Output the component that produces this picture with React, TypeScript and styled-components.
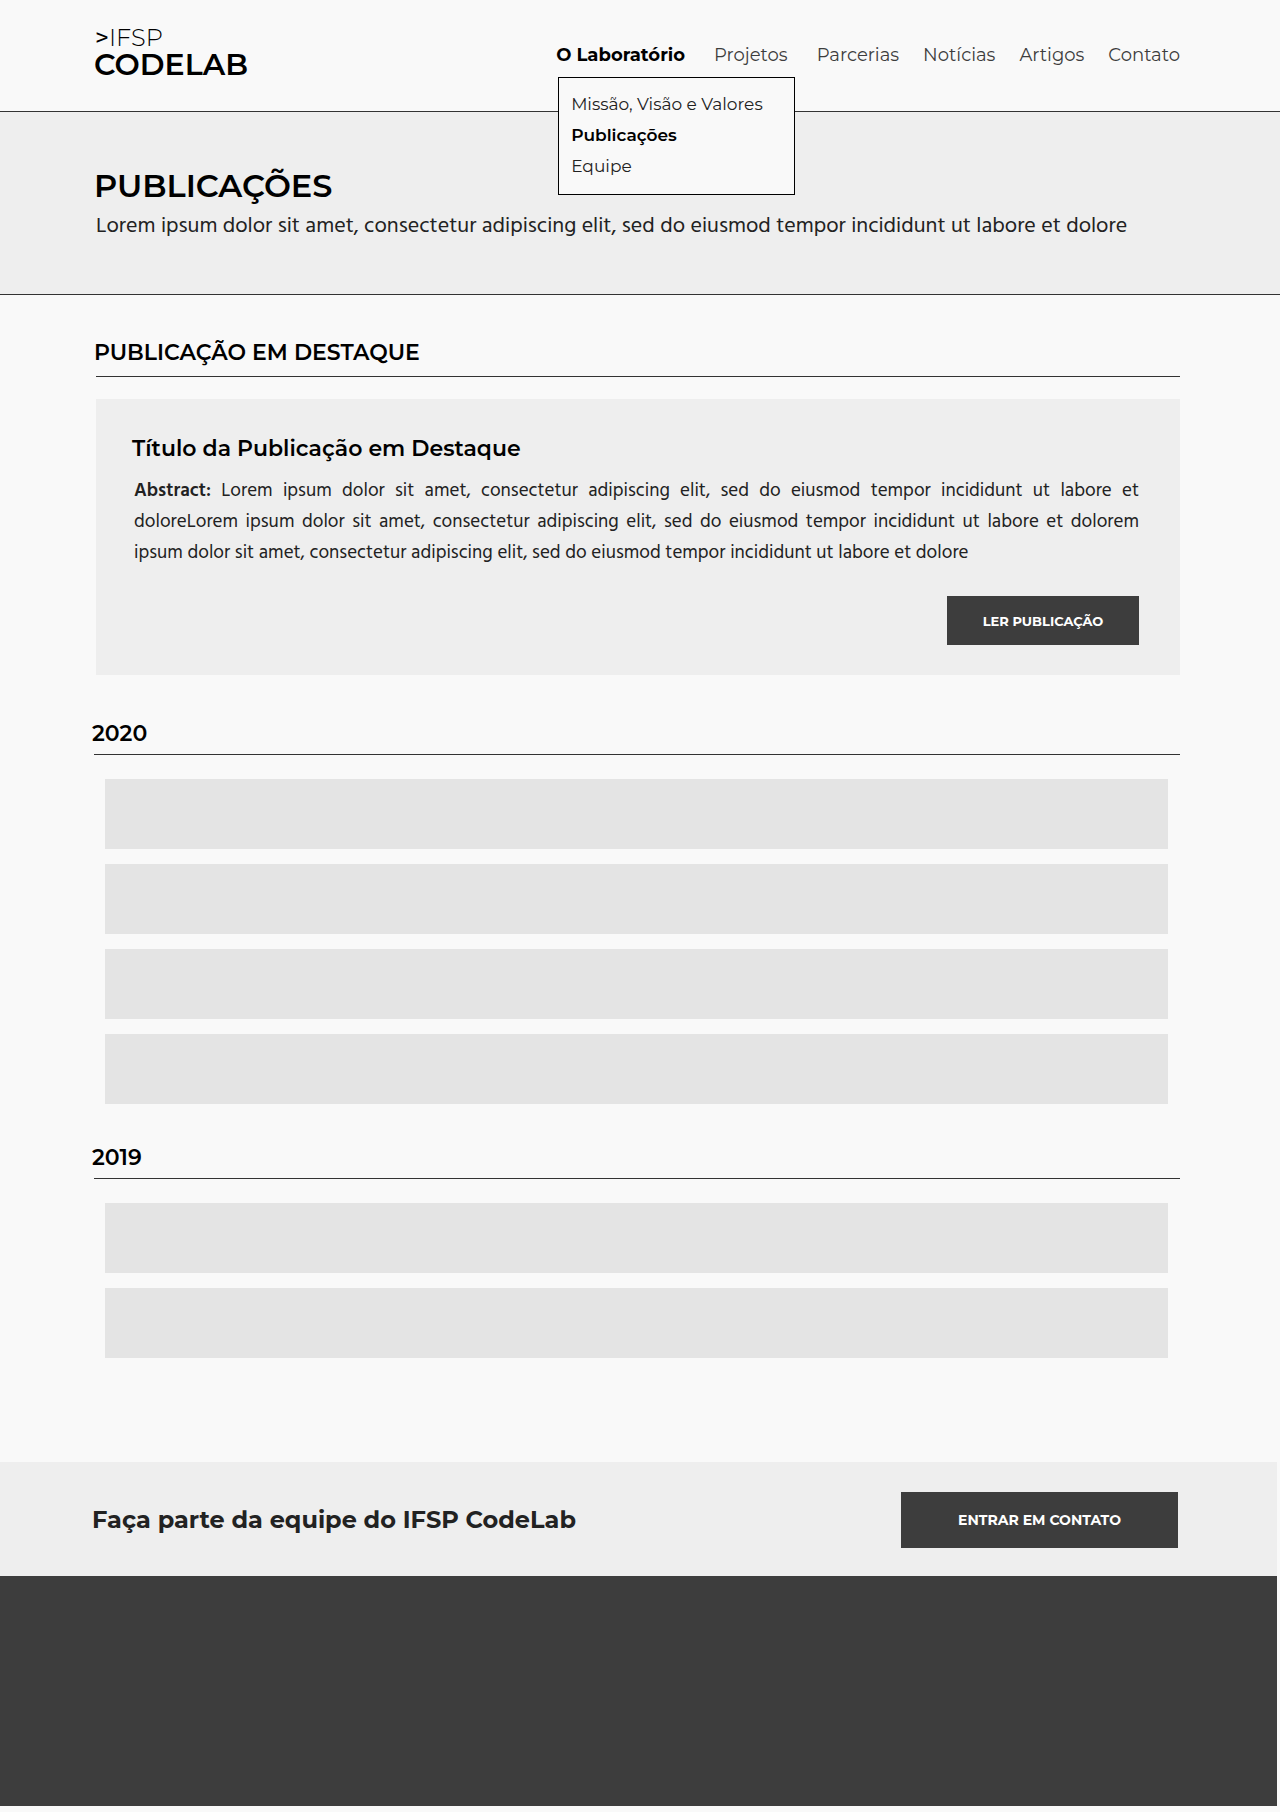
import React from "react";
import styled, { createGlobalStyle } from "styled-components";

const display = `Montserrat, Inter, "Liberation Sans", sans-serif`;
const text = `Hind, Lato, "Liberation Sans", sans-serif`;

const GlobalStyle = createGlobalStyle`
  *, *::before, *::after { box-sizing: border-box; }
  body { margin: 0; background: #f9f9f9; color: #000; font-family: ${display}; }
  h1, h2, h3, p, ul { margin: 0; padding: 0; }
  ul { list-style: none; }
  a { color: inherit; text-decoration: none; }
`;

const Page = styled.div`
  padding-bottom: 6px;
`;

const Header = styled.header`
  display: flex;
  justify-content: space-between;
  align-items: flex-start;
  height: 112px;
  padding: 25px 100px 0 94px;
  border-bottom: 1px solid #333;
`;

const Logo = styled.a`
  display: flex;
  flex-direction: column;
`;

const LogoTop = styled.span`
  padding-left: 1px;
  font-size: 24px;
  line-height: 26px;
  font-weight: 300;

  b { font-weight: 500; }
`;

const LogoName = styled.span`
  font-size: 30px;
  line-height: 28px;
  font-weight: 600;
`;

const Nav = styled.nav`
  padding-top: 15px;
`;

const NavList = styled.ul`
  display: flex;
  gap: 24px;
`;

const NavItem = styled.li<{ $spaced?: boolean }>`
  position: relative;
  margin-right: ${(p) => (p.$spaced ? 5 : 0)}px;
`;

const NavLink = styled.a<{ $active?: boolean }>`
  display: block;
  font-size: 18px;
  line-height: 30px;
  font-weight: ${(p) => (p.$active ? 700 : 400)};
  color: ${(p) => (p.$active ? "#000" : "#3d3d3d")};
  white-space: nowrap;
`;

const Submenu = styled.ul`
  position: absolute;
  top: 37px;
  left: 2px;
  z-index: 1;
  width: 237px;
  padding: 11px 12px 12px;
  background: #f9f9f9;
  border: 1px solid #000;
`;

const SubmenuLink = styled.a<{ $active?: boolean }>`
  display: block;
  font-size: 17px;
  line-height: 31px;
  font-weight: ${(p) => (p.$active ? 600 : 400)};
  color: ${(p) => (p.$active ? "#000" : "#222")};
  white-space: nowrap;
`;

const Hero = styled.section`
  padding: 54px 100px 50px 96px;
  background: #eee;
  border-bottom: 1px solid #333;
`;

const HeroTitle = styled.h1`
  margin: 0 0 4px -2px;
  font-size: 32px;
  line-height: 40px;
  font-weight: 600;
`;

const HeroText = styled.p`
  font-family: ${text};
  font-size: 22px;
  line-height: 34px;
  color: #222;
`;

const Main = styled.main`
  padding: 42px 100px 103px 94px;
`;

const Featured = styled.section`
  padding-left: 2px;
`;

const SectionTitle = styled.h2<{ $tight?: boolean }>`
  padding-bottom: ${(p) => (p.$tight ? 4 : 7)}px;
  border-bottom: 1px solid #333;
  font-size: 22px;
  line-height: 32px;
  font-weight: 600;

  span { margin-left: -2px; }
`;

const Card = styled.article`
  margin: 22px 0 43px;
  padding: 34px 41px 30px 38px;
  background: #eee;
`;

const CardTitle = styled.h3`
  margin-left: -2px;
  font-size: 22px;
  line-height: 32px;
  font-weight: 600;
`;

const Abstract = styled.p`
  margin: 11px 0 27px;
  font-family: ${text};
  font-size: 19px;
  line-height: 31px;
  color: #222;
  text-align: justify;

  b { font-weight: 600; }
`;

const CardActions = styled.div`
  display: flex;
  justify-content: flex-end;
`;

const Button = styled.button<{ $large?: boolean }>`
  width: ${(p) => (p.$large ? 277 : 192)}px;
  height: ${(p) => (p.$large ? 56 : 49)}px;
  padding: 0;
  border: 0;
  background: #3d3d3d;
  color: #fff;
  font-family: ${display};
  font-size: ${(p) => (p.$large ? 14 : 13)}px;
  font-weight: 700;
  cursor: pointer;
`;

const YearSection = styled.section`
  & + & { margin-top: 37px; }
`;

const EntryList = styled.ul`
  display: flex;
  flex-direction: column;
  gap: 15px;
  padding: 24px 12px 1px 11px;
`;

const Entry = styled.li`
  height: 70px;
  background: #e4e4e4;
`;

const CallToAction = styled.section`
  display: flex;
  justify-content: space-between;
  align-items: center;
  margin-right: 3px;
  padding: 30px 99px 28px 92px;
  background: #eee;
`;

const CallText = styled.p`
  font-size: 24px;
  line-height: 32px;
  font-weight: 700;
  color: #222;
`;

const Footer = styled.footer`
  height: 230px;
  margin-right: 3px;
  background: #3d3d3d;
`;

const navItems = ["O Laboratório", "Projetos", "Parcerias", "Notícias", "Artigos", "Contato"];
const submenuItems = ["Missão, Visão e Valores", "Publicações", "Equipe"];
const years = [
  { year: 2020, entries: 4 },
  { year: 2019, entries: 2 },
];

export default function App() {
  return (
    <>
      <GlobalStyle />
      <Page>
        <Header>
          <Logo href="#">
            <LogoTop><b>&gt;</b>IFSP</LogoTop>
            <LogoName>CODELAB</LogoName>
          </Logo>
          <Nav>
            <NavList>
              {navItems.map((item, i) => (
                <NavItem key={item} $spaced={i < 2}>
                  <NavLink href="#" $active={i === 0}>{item}</NavLink>
                  {i === 0 && (
                    <Submenu>
                      {submenuItems.map((sub) => (
                        <li key={sub}>
                          <SubmenuLink href="#" $active={sub === "Publicações"}>{sub}</SubmenuLink>
                        </li>
                      ))}
                    </Submenu>
                  )}
                </NavItem>
              ))}
            </NavList>
          </Nav>
        </Header>
        <Hero>
          <HeroTitle>PUBLICAÇÕES</HeroTitle>
          <HeroText>
            Lorem ipsum dolor sit amet, consectetur adipiscing elit, sed do eiusmod tempor incididunt ut labore et dolore
          </HeroText>
        </Hero>
        <Main>
          <Featured>
            <SectionTitle><span>PUBLICAÇÃO EM DESTAQUE</span></SectionTitle>
            <Card>
              <CardTitle>Título da Publicação em Destaque</CardTitle>
              <Abstract>
                <b>Abstract:</b> Lorem ipsum dolor sit amet, consectetur adipiscing elit, sed do eiusmod tempor
                incididunt ut labore et doloreLorem ipsum dolor sit amet, consectetur adipiscing elit, sed do eiusmod
                tempor incididunt ut labore et dolorem ipsum dolor sit amet, consectetur adipiscing elit, sed do
                eiusmod tempor incididunt ut labore et dolore
              </Abstract>
              <CardActions>
                <Button type="button">LER PUBLICAÇÃO</Button>
              </CardActions>
            </Card>
          </Featured>
          {years.map(({ year, entries }) => (
            <YearSection key={year}>
              <SectionTitle $tight><span>{year}</span></SectionTitle>
              <EntryList>
                {Array.from({ length: entries }, (_, i) => (
                  <Entry key={i} />
                ))}
              </EntryList>
            </YearSection>
          ))}
        </Main>
        <CallToAction>
          <CallText>Faça parte da equipe do IFSP CodeLab</CallText>
          <Button type="button" $large>ENTRAR EM CONTATO</Button>
        </CallToAction>
        <Footer />
      </Page>
    </>
  );
}
